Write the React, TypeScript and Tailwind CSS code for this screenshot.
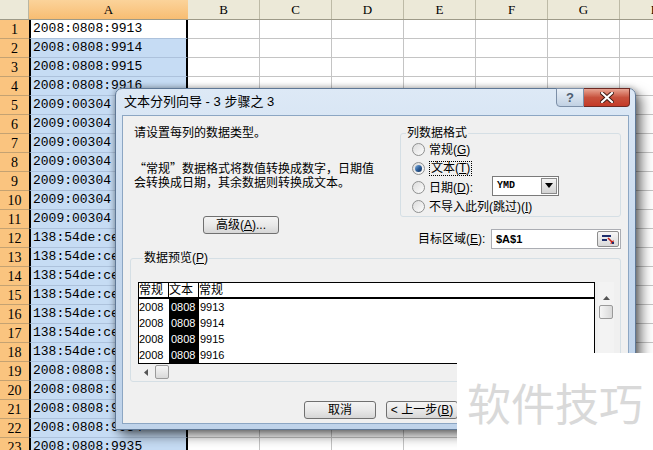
import React from "react";

const ui = "font-['Liberation_Sans','Noto_Sans_CJK_SC',sans-serif]";

const sheetRows = [
  "2008:0808:9913",
  "2008:0808:9914",
  "2008:0808:9915",
  "2008:0808:9916",
  "2009:00304",
  "2009:00304",
  "2009:00304",
  "2009:00304",
  "2009:00304",
  "2009:00304",
  "2009:00304",
  "138:54de:ce01:a1",
  "138:54de:ce01:a2",
  "138:54de:ce01:a3",
  "138:54de:ce01:a4",
  "138:54de:ce01:a5",
  "138:54de:ce01:a6",
  "138:54de:ce01:a7",
  "2008:0808:9931",
  "2008:0808:9932",
  "2008:0808:9933",
  "2008:0808:9934",
  "2008:0808:9935",
];

const cols = ["B", "C", "D", "E", "F", "G", "H"];

const preview = [
  ["2008", "0808", "9913"],
  ["2008", "0808", "9914"],
  ["2008", "0808", "9915"],
  ["2008", "0808", "9916"],
];

function Radio({ checked }: { checked?: boolean }) {
  return (
    <span className="w-[13px] h-[13px] shrink-0 rounded-full border border-[#8f9090] bg-gradient-to-br from-[#dcdcdc] to-[#fdfdfd] flex items-center justify-center">
      {checked && <span className="w-[7px] h-[7px] rounded-full bg-gradient-to-br from-[#8ab8e6] via-[#2d5f9a] to-[#14305a]" />}
    </span>
  );
}

function Btn({ children }: { children: React.ReactNode }) {
  return (
    <div className="w-[72px] h-[18px] shrink-0 rounded-[3px] border border-[#707070] bg-gradient-to-b from-[#f4f4f4] via-[#e9e9e9] to-[#d6d6d6] flex items-center justify-center text-[12px] leading-none text-black">
      {children}
    </div>
  );
}

function Sheet() {
  return (
    <div className="flex flex-col">
      <div className="flex h-[20px] border-b border-[#9d9a88]">
        <div className="w-[29px] shrink-0 bg-[#ece9d8] border-r border-[#b9b6a2]" />
        <div className="w-[159px] shrink-0 bg-gradient-to-b from-[#fbd39a] to-[#f8bd72] flex items-center justify-center text-[13px] font-['Liberation_Serif',serif] text-black">
          A
        </div>
        {cols.map((c) => (
          <div
            key={c}
            className="w-[72px] shrink-0 bg-[#ece9d8] border-r border-[#bdbaa6] flex items-center justify-center text-[13px] font-['Liberation_Serif',serif] text-black"
          >
            {c}
          </div>
        ))}
      </div>
      {sheetRows.map((v, i) => (
        <div key={i} className="flex h-[19px] shrink-0">
          <div className="w-[29px] shrink-0 bg-[#fac47f] border-b border-[#c4a272] flex items-center justify-center text-[14px] font-['Liberation_Serif',serif] text-black">
            {i + 1}
          </div>
          <div
            className={`w-[159px] shrink-0 border-x-2 border-x-black border-b border-b-[#adc2dc] flex items-center pl-[2px] whitespace-nowrap text-[13px] font-['Liberation_Mono',monospace] text-black ${
              i === 0 ? "bg-white" : "bg-[#c6dcf4]"
            }`}
          >
            {v}
          </div>
          {cols.map((c) => (
            <div key={c} className="w-[72px] shrink-0 border-r border-b border-[#c4c4c4] bg-white" />
          ))}
        </div>
      ))}
    </div>
  );
}

function Dialog() {
  return (
    <div
      className={`absolute left-[115px] top-[88px] w-[521px] h-[342px] flex flex-col rounded-t-[7px] border border-[#5f7896] bg-gradient-to-b from-[#dde9f6] via-[#c4d7ed] to-[#bfd3ea] shadow-[0_0_6px_rgba(0,0,0,0.35),6px_6px_12px_rgba(0,0,0,0.5)] ${ui}`}
    >
      <div className="h-[26px] flex items-start shrink-0">
        <span className="ml-[8px] mt-[6px] text-[13px] leading-[14px] text-black">文本分列向导 - 3 步骤之 3</span>
        <div className="ml-auto mr-[5px] flex -mt-px">
          <div className="w-[28px] h-[19px] rounded-bl-[4px] border border-[#7c8fa8] bg-gradient-to-b from-[#e9f0f8] to-[#c1d1e3] flex items-center justify-center text-[13px] font-bold text-[#4d5d70] leading-none">
            ?
          </div>
          <div className="w-[46px] h-[19px] rounded-br-[4px] border border-[#6d2a24] border-l-0 bg-gradient-to-b from-[#e8a493] via-[#c7513d] to-[#c43a28] flex items-center justify-center">
            <svg width="14" height="11" viewBox="0 0 14 11">
              <path d="M2 1 L12 10 M12 1 L2 10" stroke="#3b1710" strokeWidth="4" strokeLinecap="square" />
              <path d="M2 1 L12 10 M12 1 L2 10" stroke="#ffffff" strokeWidth="2.2" strokeLinecap="square" />
            </svg>
          </div>
        </div>
      </div>

      <div className="mx-[6px] mb-[5px] flex-1 border border-[#8ca6c3] bg-[#f0f0f0] px-[7px] pt-[10px] text-[12px] leading-[14px] text-black">
        <div className="flex">
          <div className="w-[270px] shrink-0 pl-[4px]">
            <p>请设置每列的数据类型。</p>
            <p className="mt-[21px]">
              <span className="font-['Noto_Sans_CJK_SC',sans-serif]">“</span>常规
              <span className="font-['Noto_Sans_CJK_SC',sans-serif]">”</span>数据格式将数值转换成数字，日期值
              <br />
              会转换成日期，其余数据则转换成文本。
            </p>
            <div className="mt-[26px] ml-[69px]">
              <div className="w-[76px] h-[18px] rounded-[3px] border border-[#707070] bg-gradient-to-b from-[#f4f4f4] via-[#e9e9e9] to-[#d6d6d6] flex items-center justify-center text-[12px] leading-none">
                高级(<u>A</u>)...
              </div>
            </div>
          </div>

          <div className="w-[221px] shrink-0 flex flex-col">
            <fieldset className="border border-[#d5dfe5] rounded-[3px]">
              <legend className="ml-[5px] px-[1px] leading-[14px]">列数据格式</legend>
              <div className="flex h-[19px] items-center gap-[4px] pl-[11px]">
                <Radio />
                <span>
                  常规(<u>G</u>)
                </span>
              </div>
              <div className="flex h-[19px] items-center gap-[4px] pl-[11px]">
                <Radio checked />
                <span className="border border-dotted border-black px-[1px] leading-[13px]">
                  文本(<u>T</u>)
                </span>
              </div>
              <div className="flex h-[19px] items-center gap-[4px] pl-[11px]">
                <Radio />
                <span className="w-[59px] shrink-0">
                  日期(<u>D</u>):
                </span>
                <div className="w-[67px] h-[20px] -mt-[4px] border border-[#7a7a7a] bg-white flex items-center">
                  <span className="ml-[4px] text-[10px] font-bold font-['Liberation_Mono',monospace]">YMD</span>
                  <div className="ml-auto mr-[1px] w-[16px] h-[16px] border border-[#8a8a8a] bg-gradient-to-b from-[#f3f3f3] to-[#d3d3d3] flex items-center justify-center">
                    <svg width="8" height="5" viewBox="0 0 8 5">
                      <polygon points="0,0 8,0 4,5" fill="#000" />
                    </svg>
                  </div>
                </div>
              </div>
              <div className="flex h-[19px] items-center gap-[4px] pl-[11px]">
                <Radio />
                <span>
                  不导入此列(跳过)(<u>I</u>)
                </span>
              </div>
            </fieldset>

            <div className="mt-[12px] flex h-[20px] items-center pl-[18px]">
              <span className="w-[73px] shrink-0">
                目标区域(<u>E</u>):
              </span>
              <div className="w-[132px] h-[20px] border border-[#abadb3] bg-white flex items-center">
                <span className="ml-[4px] text-[11px] font-bold">$A$1</span>
                <div className="ml-auto mr-[1px] w-[22px] h-[16px] rounded-[2px] border border-[#8d8d8d] bg-gradient-to-b from-[#f7f7f7] to-[#d9d9d9] flex items-center justify-center">
                  <svg width="14" height="10" viewBox="0 0 14 10">
                    <rect x="1" y="1" width="9" height="2" fill="#1f2f6e" />
                    <rect x="1" y="5" width="5" height="2" fill="#1f2f6e" />
                    <path d="M7 4 L12 9" stroke="#c8201a" strokeWidth="1.6" />
                    <polygon points="13,10 9,9.5 12.5,6" fill="#c8201a" />
                    <rect x="11" y="8" width="2" height="2" fill="#1f2f6e" />
                  </svg>
                </div>
              </div>
            </div>
          </div>
        </div>

        <fieldset className="mt-[2px] w-[491px] border border-[#d5dfe5] rounded-[3px] pl-[7px] pb-[2px]">
          <legend className="ml-[5px] px-[1px] leading-[14px]">
            数据预览(<u>P</u>)
          </legend>
          <div className="mt-[17px] flex gap-[3px]">
            <div className="w-[457px] border border-black bg-white text-[11px] leading-none font-['Liberation_Sans',sans-serif]">
              <div className={`flex h-[16px] border-b-2 border-black bg-white text-[12px] ${ui}`}>
                <div className="w-[30px] border-r border-black flex items-center overflow-hidden">常规</div>
                <div className="w-[30px] border-r border-black flex items-center overflow-hidden">文本</div>
                <div className="flex-1 flex items-center">常规</div>
              </div>
              {preview.map((r, i) => (
                <div key={i} className="flex h-[16px]">
                  <div className="w-[30px] flex items-center">{r[0]}</div>
                  <div className="w-[30px] border-r border-black bg-black text-white flex items-center pl-[2px]">{r[1]}</div>
                  <div className="flex-1 flex items-center pl-[1px]">{r[2]}</div>
                </div>
              ))}
            </div>
            <div className="w-[16px] bg-[#f3f3f3] flex flex-col items-center">
              <svg className="mt-[14px]" width="7" height="4" viewBox="0 0 7 4">
                <polygon points="0,4 7,4 3.5,0" fill="#555" />
              </svg>
              <div className="mt-[5px] w-[14px] h-[14px] rounded-[2px] border border-[#9a9a9a] bg-gradient-to-r from-[#f6f6f6] to-[#d9d9d9]" />
            </div>
          </div>
          <div className="mt-[1px] w-[457px] h-[14px] flex items-center">
            <svg className="ml-[6px]" width="4" height="7" viewBox="0 0 4 7">
              <polygon points="4,0 4,7 0,3.5" fill="#555" />
            </svg>
            <div className="ml-[7px] w-[14px] h-[14px] rounded-[2px] border border-[#9a9a9a] bg-gradient-to-b from-[#f6f6f6] to-[#d9d9d9]" />
          </div>
        </fieldset>

        {/* the other two wizard buttons sit under the watermark */}
        <div className="mt-[19px] flex gap-[10px] pl-[174px]">
          <Btn>取消</Btn>
          <Btn>
            &lt; 上一步(<u>B</u>)
          </Btn>
        </div>
      </div>
    </div>
  );
}

export default function App() {
  return (
    <div className="relative w-[653px] h-[450px] overflow-hidden bg-white">
      <Sheet />
      <Dialog />
      <div className="absolute left-[457px] top-[353px] w-[196px] h-[97px] bg-white flex items-center justify-center">
        <span className="text-[44px] leading-none text-[#d9d9d9] font-['Noto_Sans_CJK_SC',sans-serif]">软件技巧</span>
      </div>
    </div>
  );
}
